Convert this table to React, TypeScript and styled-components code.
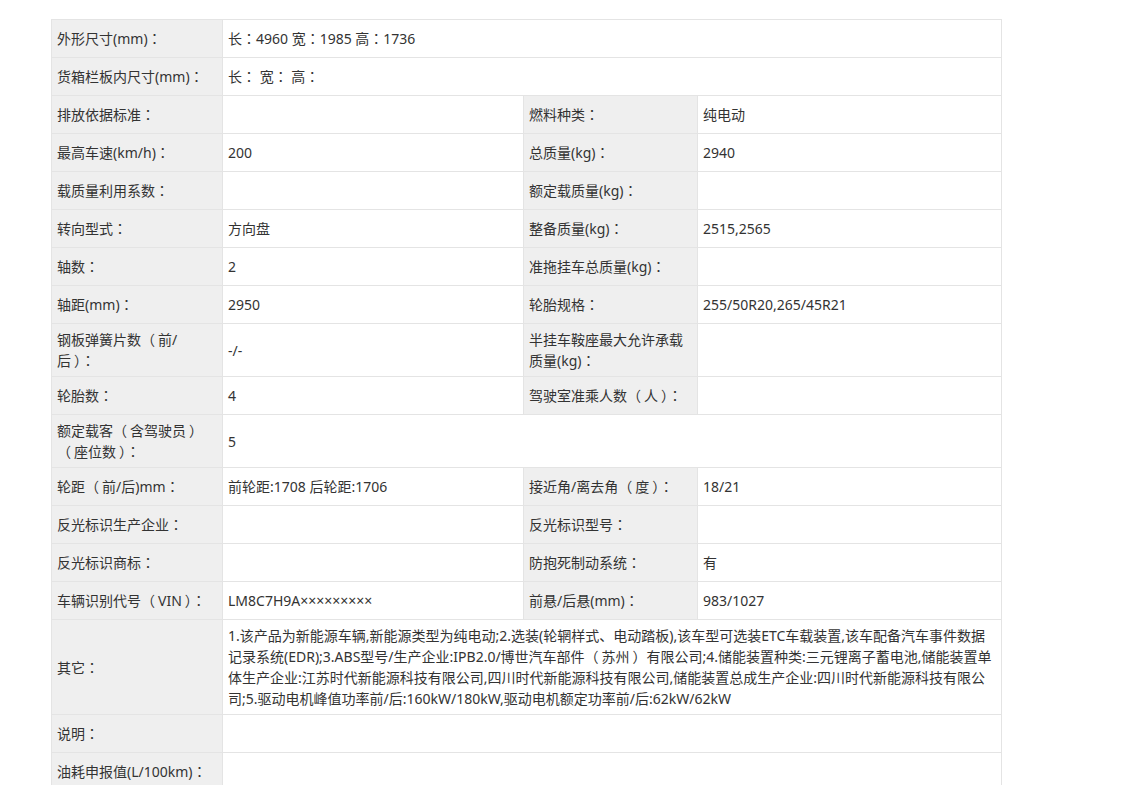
import React from "react";
import styled, { createGlobalStyle } from "styled-components";

const Global = createGlobalStyle`
  html, body { margin: 0; padding: 0; background: #ffffff; }
  body { font-family: "Noto Sans", "Noto Sans CJK SC", sans-serif; }
`;

const Page = styled.div`
  padding: 19px 0 0 51px;
  width: 1122px;
  height: 785px;
  box-sizing: border-box;
  overflow: hidden;
`;

const Table = styled.table`
  border-collapse: collapse;
  table-layout: fixed;
  width: 950px;
  font-size: 14px;
  line-height: 21px;
  color: #333333;
`;

const Row = styled.tr`
  height: 38px;
`;

const Label = styled.td`
  background: #efefef;
  border: 1px solid #e4e4e4;
  padding: 5px 5px;
  vertical-align: middle;
  color: #333333;
`;

const Value = styled.td`
  background: #ffffff;
  border: 1px solid #e4e4e4;
  padding: 5px 5px;
  vertical-align: middle;
  color: #333333;
`;

/* full-width colon centred in its em box, as in the original page font */
const Colon = styled.span`
  font-family: "Noto Sans CJK JP", "Noto Sans CJK SC", sans-serif;
`;

/* full-width bracket with a little air on its inner side, as in the original page font */
const Bracket = styled.span<{ $open: boolean }>`
  font-family: "Noto Sans CJK SC", sans-serif;
  ${(p) => (p.$open ? "padding-right: 3px;" : "padding-left: 3px;")}
`;

function fw(text?: string): React.ReactNode {
  if (!text) return null;
  const parts = text.split(/([：（）])/);
  return parts.map((p, i) => {
    if (p === "：") return <Colon key={i}>：</Colon>;
    if (p === "（") return <Bracket key={i} $open>（</Bracket>;
    if (p === "）") return <Bracket key={i} $open={false}>）</Bracket>;
    return p;
  });
}

const other = (
  <>
    1.该产品为新能源车辆,新能源类型为纯电动;2.选装(轮辋样式、电动踏板),该车型可选装ETC车载装置,该车配备汽车事件数据<br />
    记录系统(EDR);3.ABS型号/生产企业:IPB2.0/博世汽车部件{fw("（")}苏州{fw("）")}有限公司;4.储能装置种类:三元锂离子蓄电池,储能装置单<br />
    体生产企业:江苏时代新能源科技有限公司,四川时代新能源科技有限公司,储能装置总成生产企业:四川时代新能源科技有限公<br />
    司;5.驱动电机峰值功率前/后:160kW/180kW,驱动电机额定功率前/后:62kW/62kW
  </>
);

const Full = ({ label, value }: { label: React.ReactNode; value?: React.ReactNode }) => (
  <Row>
    <Label>{label}</Label>
    <Value colSpan={3}>{value}</Value>
  </Row>
);

const Two = ({ a, b, c, d }: { a: React.ReactNode; b?: React.ReactNode; c: React.ReactNode; d?: React.ReactNode }) => (
  <Row>
    <Label>{a}</Label>
    <Value>{b}</Value>
    <Label>{c}</Label>
    <Value>{d}</Value>
  </Row>
);

export default function App() {
  return (
    <Page>
      <Global />
      <Table>
        <colgroup>
          <col style={{ width: 171 }} />
          <col style={{ width: 301 }} />
          <col style={{ width: 174 }} />
          <col style={{ width: 304 }} />
        </colgroup>
        <tbody>
          <Full label={fw("外形尺寸(mm)：")} value={fw("长：4960 宽：1985 高：1736")} />
          <Full label={fw("货箱栏板内尺寸(mm)：")} value={fw("长： 宽： 高：")} />
          <Two a={fw("排放依据标准：")} c={fw("燃料种类：")} d="纯电动" />
          <Two a={fw("最高车速(km/h)：")} b="200" c={fw("总质量(kg)：")} d="2940" />
          <Two a={fw("载质量利用系数：")} c={fw("额定载质量(kg)：")} />
          <Two a={fw("转向型式：")} b="方向盘" c={fw("整备质量(kg)：")} d="2515,2565" />
          <Two a={fw("轴数：")} b="2" c={fw("准拖挂车总质量(kg)：")} />
          <Two a={fw("轴距(mm)：")} b="2950" c={fw("轮胎规格：")} d="255/50R20,265/45R21" />
          <Two
            a={<>{fw("钢板弹簧片数（前/")}<br />{fw("后）：")}</>}
            b="-/-"
            c={<>半挂车鞍座最大允许承载<br />{fw("质量(kg)：")}</>}
          />
          <Two a={fw("轮胎数：")} b="4" c={fw("驾驶室准乘人数（人）：")} />
          <Full label={<>{fw("额定载客（含驾驶员）")}<br />{fw("（座位数）：")}</>} value="5" />
          <Two a={fw("轮距（前/后)mm：")} b="前轮距:1708 后轮距:1706" c={fw("接近角/离去角（度）：")} d="18/21" />
          <Two a={fw("反光标识生产企业：")} c={fw("反光标识型号：")} />
          <Two a={fw("反光标识商标：")} c={fw("防抱死制动系统：")} d="有" />
          <Two a={fw("车辆识别代号（VIN）：")} b="LM8C7H9A×××××××××" c={fw("前悬/后悬(mm)：")} d="983/1027" />
          <Full label={fw("其它：")} value={other} />
          <Full label={fw("说明：")} />
          <Full label={fw("油耗申报值(L/100km)：")} />
        </tbody>
      </Table>
    </Page>
  );
}
